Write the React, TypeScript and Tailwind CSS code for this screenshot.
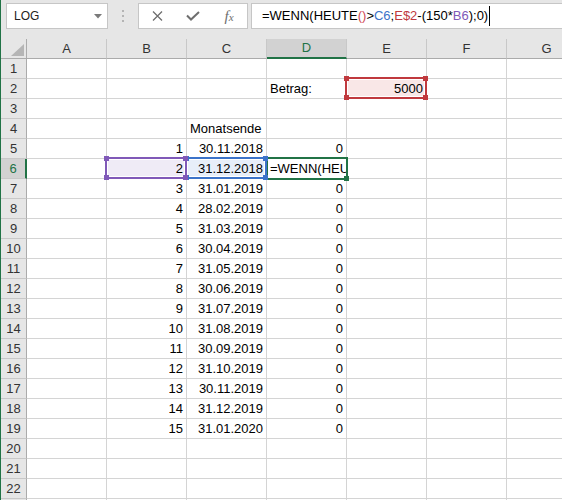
import React from 'react';

const cols = ['A', 'B', 'C', 'D', 'E', 'F', 'G'];
const dates = [
  '30.11.2018', '31.12.2018', '31.01.2019', '28.02.2019', '31.03.2019',
  '30.04.2019', '31.05.2019', '30.06.2019', '31.07.2019', '31.08.2019',
  '30.09.2019', '31.10.2019', '30.11.2019', '31.12.2019', '31.01.2020',
];

type Cell = { t?: string; r?: boolean; bg?: string };

function cellAt(row: number, col: number): Cell {
  if (row === 2 && col === 3) return { t: 'Betrag:' };
  if (row === 2 && col === 4) return { t: '5000', r: true, bg: 'bg-[#f9e7e7]' };
  if (row === 4 && col === 2) return { t: 'Monatsende' };
  if (row >= 5 && row <= 19) {
    const i = row - 5;
    if (col === 1) return { t: String(i + 1), r: true, bg: row === 6 ? 'bg-[#efebf6]' : undefined };
    if (col === 2) return { t: dates[i], r: true, bg: row === 6 ? 'bg-[#e7eef9]' : undefined };
    if (col === 3) return row === 6 ? { t: '=WENN(HEU' } : { t: '0', r: true };
  }
  return {};
}

const rows = Array.from({ length: 23 }, (_, i) => i + 1);

export default function App() {
  return (
    <div className="relative w-[562px] h-[500px] overflow-hidden bg-white flex font-['Liberation_Sans',Arial,sans-serif] text-[13px] text-black">
      <div className="w-px shrink-0 bg-[#217346]" />
      <div className="flex-1 flex flex-col min-w-0">
        {/* formula bar */}
        <div className="h-[39px] shrink-0 bg-[#e6e6e6] flex items-start pt-[3px]">
          <div className="ml-[5px] w-[102px] h-[26px] shrink-0 bg-white border border-[#c6c6c6] flex items-center pl-[7px] pr-[5px] text-[12px] text-[#222]">
            <span className="flex-1">LOG</span>
            <svg width="8" height="5" viewBox="0 0 8 5">
              <path d="M0 0H8L4 4.5Z" fill="#7a7a7a" />
            </svg>
          </div>
          <div className="w-[30px] h-[26px] shrink-0 flex flex-col items-center justify-center gap-[3px]">
            <div className="w-[2px] h-[2px] bg-[#b4b4b4]" />
            <div className="w-[2px] h-[2px] bg-[#b4b4b4]" />
            <div className="w-[2px] h-[2px] bg-[#b4b4b4]" />
          </div>
          <div className="w-[110px] h-[26px] shrink-0 bg-white border border-[#c6c6c6] flex items-center">
            <div className="w-[36px] flex justify-center">
              <svg width="11" height="10" viewBox="0 0 11 10">
                <path d="M1 0.5L10 9.5M10 0.5L1 9.5" stroke="#6e6e6e" strokeWidth="1.3" />
              </svg>
            </div>
            <div className="w-[36px] flex justify-center">
              <svg width="14" height="10" viewBox="0 0 14 10">
                <path d="M1 4.5L5 8.5L13 1" stroke="#6e6e6e" strokeWidth="2" fill="none" />
              </svg>
            </div>
            <div className="w-[36px] flex justify-center items-baseline font-['Liberation_Serif',serif] italic text-[#6e6e6e]">
              <span className="text-[15px]">f</span>
              <span className="text-[11px]">x</span>
            </div>
          </div>
          <div className="ml-[3px] flex-1 h-[26px] bg-white border-y border-l border-[#c6c6c6] flex items-center pl-[10px] whitespace-nowrap">
            <span>=WENN(HEUTE</span>
            <span className="text-[#d04a55]">()</span>
            <span>&gt;</span>
            <span className="text-[#3c73c9]">C6</span>
            <span>;</span>
            <span className="text-[#c0393e]">E$2</span>
            <span>-(150*</span>
            <span className="text-[#8059b8]">B6</span>
            <span>);0)</span>
            <span className="w-px h-[20px] bg-black ml-[1px]" />
          </div>
        </div>

        {/* column headers */}
        <div className="flex h-[20px] shrink-0 bg-[#e6e6e6] text-[#333]">
          <div className="w-[26px] shrink-0 border-r border-b border-[#ababab] flex items-end justify-end pr-[2px] pb-[2px]">
            <svg width="13" height="12" viewBox="0 0 13 12">
              <path d="M13 0V12H0Z" fill="#b5b5b5" />
            </svg>
          </div>
          {cols.map((c) => (
            <div
              key={c}
              className={`w-[80px] shrink-0 flex items-center justify-center border-r border-r-[#c8c8c8] ${
                c === 'D'
                  ? 'bg-[#d2d2d2] border-b-2 border-b-[#217346] text-[#217346]'
                  : 'border-b border-b-[#ababab]'
              }`}
            >
              {c}
            </div>
          ))}
        </div>

        {/* rows */}
        {rows.map((r) => (
          <div key={r} className="flex h-[20px] shrink-0">
            <div
              className={`w-[26px] shrink-0 flex items-center justify-center border-b border-b-[#c8c8c8] ${
                r === 6
                  ? 'bg-[#d2d2d2] border-r-2 border-r-[#217346] text-[#217346]'
                  : 'bg-[#e6e6e6] border-r border-r-[#ababab] text-[#333]'
              }`}
            >
              {r <= 22 ? r : ''}
            </div>
            {cols.map((c, ci) => {
              const cell = cellAt(r, ci);
              return (
                <div
                  key={c}
                  className={`w-[80px] shrink-0 flex items-center overflow-hidden whitespace-nowrap border-r border-b border-[#d4d4d4] px-[3px] ${
                    cell.r ? 'justify-end' : 'justify-start'
                  } ${cell.bg ?? ''}`}
                >
                  {cell.t}
                </div>
              );
            })}
          </div>
        ))}
      </div>

      {/* active cell D6 */}
      <div className="absolute left-[266px] top-[157px] w-[82px] h-[23px] border-2 border-[#217346]" />
      <div className="absolute left-[344px] top-[176px] w-[5px] h-[5px] bg-[#217346]" />

      {/* C6 reference (blue) */}
      <div className="absolute left-[185px] top-[157px] w-[82px] h-[22px] border-2 border-[#3c73c9] shadow-[inset_0_0_0_1px_#fff]" />
      <div className="absolute left-[184px] top-[156px] w-[5px] h-[5px] bg-[#3c73c9]" />
      <div className="absolute left-[263px] top-[156px] w-[5px] h-[5px] bg-[#3c73c9]" />
      <div className="absolute left-[184px] top-[175px] w-[5px] h-[5px] bg-[#3c73c9]" />
      <div className="absolute left-[263px] top-[175px] w-[5px] h-[5px] bg-[#3c73c9]" />

      {/* B6 reference (purple) */}
      <div className="absolute left-[105px] top-[157px] w-[82px] h-[22px] border-2 border-[#8059b8] shadow-[inset_0_0_0_1px_#fff]" />
      <div className="absolute left-[104px] top-[156px] w-[5px] h-[5px] bg-[#8059b8]" />
      <div className="absolute left-[183px] top-[156px] w-[5px] h-[5px] bg-[#8059b8]" />
      <div className="absolute left-[104px] top-[175px] w-[5px] h-[5px] bg-[#8059b8]" />
      <div className="absolute left-[183px] top-[175px] w-[5px] h-[5px] bg-[#8059b8]" />

      {/* E2 reference (red) */}
      <div className="absolute left-[345px] top-[77px] w-[82px] h-[22px] border-2 border-[#c0393e] shadow-[inset_0_0_0_1px_#fff]" />
      <div className="absolute left-[344px] top-[76px] w-[5px] h-[5px] bg-[#c0393e]" />
      <div className="absolute left-[423px] top-[76px] w-[5px] h-[5px] bg-[#c0393e]" />
      <div className="absolute left-[344px] top-[95px] w-[5px] h-[5px] bg-[#c0393e]" />
      <div className="absolute left-[423px] top-[95px] w-[5px] h-[5px] bg-[#c0393e]" />
    </div>
  );
}
